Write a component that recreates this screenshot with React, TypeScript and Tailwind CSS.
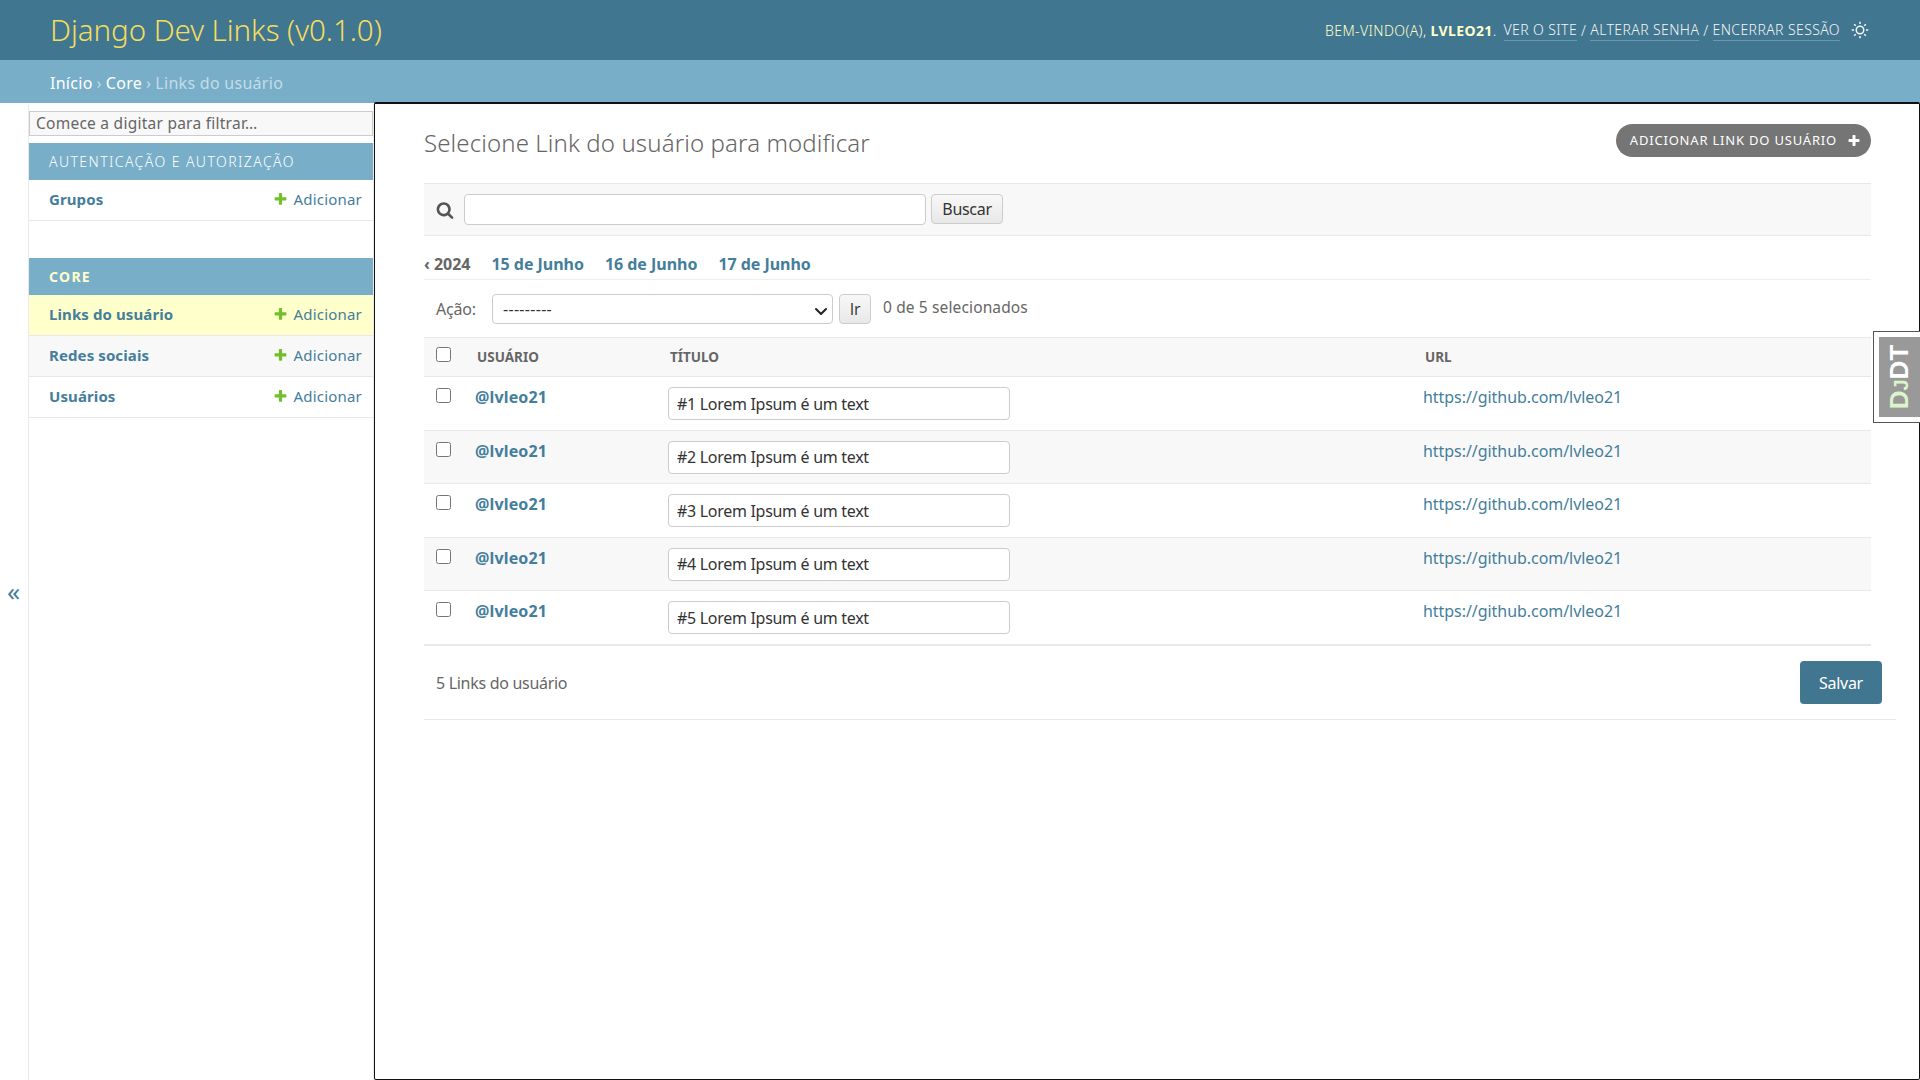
import React from "react";

const Plus = ({ className = "" }: { className?: string }) => (
  <svg viewBox="0 0 1792 1792" className={className} fill="currentColor">
    <path d="M1600 736v192q0 40-28 68t-68 28h-416v416q0 40-28 68t-68 28h-192q-40 0-68-28t-28-68v-416h-416q-40 0-68-28t-28-68v-192q0-40 28-68t68-28h416v-416q0-40 28-68t68-28h192q40 0 68 28t28 68v416h416q40 0 68 28t28 68z" />
  </svg>
);

const SearchIcon = () => (
  <svg viewBox="0 0 1792 1792" className="w-[18px] h-[18px] text-[#555]" fill="currentColor">
    <path d="M1216 832q0-185-131.500-316.500t-316.500-131.500-316.500 131.500-131.500 316.500 131.500 316.500 316.500 131.500 316.500-131.500 131.500-316.500zm512 832q0 52-38 90t-90 38q-54 0-90-38l-343-342q-179 124-399 124-143 0-273.500-55.500t-225-150-150-225-55.500-273.500 55.500-273.500 150-225 225-150 273.500-55.500 273.500 55.500 225 150 150 225 55.500 273.500q0 220-124 399l343 343q37 37 37 90z" />
  </svg>
);

const Sun = () => (
  <svg viewBox="0 0 24 24" className="w-[18px] h-[18px] block" fill="#f5f5f5">
    <path d="M12 18a6 6 0 1 1 0-12 6 6 0 0 1 0 12zm0-2a4 4 0 1 0 0-8 4 4 0 0 0 0 8zM11 1h2v3h-2V1zm0 19h2v3h-2v-3zM3.515 4.929l1.414-1.414L7.05 5.636 5.636 7.05 3.515 4.93zM16.95 18.364l1.414-1.414 2.121 2.121-1.414 1.414-2.121-2.121zm2.121-14.85l1.414 1.415-2.121 2.121-1.414-1.414 2.121-2.121zM5.636 16.95l1.414 1.414-2.121 2.121-1.414-1.414 2.121-2.121zM23 11v2h-3v-2h3zM4 11v2H1v-2h3z" />
  </svg>
);

const Chevron = () => (
  <svg viewBox="0 0 16 16" className="w-[16px] h-[16px] absolute right-[3px] top-[8px] text-[#222] pointer-events-none" fill="none" stroke="currentColor" strokeWidth="2" strokeLinecap="round" strokeLinejoin="round">
    <path d="M3 6l5 5 5-5" />
  </svg>
);

const Checkbox = () => (
  <span className="block w-[15px] h-[15px] rounded-[2.5px] border border-[#767676] bg-white shrink-0" />
);

const Row = ({ label, active, alt }: { label: string; active?: boolean; alt?: boolean }) => (
  <div
    className={`flex items-center justify-between h-[41px] pl-[20px] pr-[11px] pb-[2px] border-b border-[#e8e8e8] ${
      active ? "bg-[#ffffcc]" : alt ? "bg-[#f8f8f8]" : "bg-white"
    }`}
  >
    <a className="text-[#447e9b] text-[15px] tracking-[0.1px] font-bold">{label}</a>
    <span className="flex items-center gap-[5px] text-[#447e9b] text-[15px] tracking-[0.2px]">
      <Plus className="w-[15px] h-[15px] text-[#70bf2b]" />
      Adicionar
    </span>
  </div>
);

const rows = [1, 2, 3, 4, 5];

export default function App() {
  return (
    <div className="w-[1920px] h-[1080px] overflow-hidden bg-white flex flex-col font-['Noto_Sans',sans-serif] text-[#333]">
      <header className="h-[60px] shrink-0 bg-[#417690] flex items-center justify-between pl-[50px] pr-[51px]">
        <h1 className="text-[29.5px] font-light text-[#f5dd5d] tracking-[-0.05px]">Django Dev Links (v0.1.0)</h1>
        <div className="flex items-center text-[#ffffcc] text-[14px] uppercase tracking-[0.4px] font-light">
          <span>Bem-vindo(a), <strong className="font-bold">lvleo21</strong>.</span>
          <a className="ml-[7px] border-b border-white/25 text-[#f5f5f5]">Ver o site</a>
          <span className="mx-[4px] text-[#f5f5f5]">/</span>
          <a className="border-b border-white/25 text-[#f5f5f5]">Alterar senha</a>
          <span className="mx-[4px] text-[#f5f5f5]">/</span>
          <a className="border-b border-white/25 text-[#f5f5f5]">Encerrar sessão</a>
          <span className="ml-[11px]"><Sun /></span>
        </div>
      </header>
      <nav className="h-[43px] shrink-0 bg-[#79aec8] flex items-center pl-[50px] pt-[3px] text-[16px] tracking-[0.28px] text-[#c4dce8]">
        <a className="text-white">Início</a>
        <span className="mx-[4px]">›</span>
        <a className="text-white">Core</a>
        <span className="mx-[4px]">›</span>
        <span>Links do usuário</span>
      </nav>
      <div className="flex-1 flex min-h-0 mt-[1px]">
        <button className="w-[29px] shrink-0 border-r border-[#eaeaea] flex items-center justify-center text-[#447e9b] text-[26px] pb-[2px] pr-[1px]">«</button>
        <aside className="w-[345px] shrink-0 pt-[7px] border-r border-[#eaeaea]">
          <div className="h-[25px] border border-[#cccccc] bg-[#f8f8f8] flex items-center pl-[6px] pt-[1px] text-[#666] text-[15.5px] tracking-[0.25px]">Comece a digitar para filtrar…</div>
          <div className="mt-[7px] h-[37px] bg-[#79aec8] flex items-center pl-[20px] text-[14px] text-white uppercase tracking-[1.43px] font-light">Autenticação e Autorização</div>
          <Row label="Grupos" />
          <div className="h-[37px]" />
          <div className="h-[37px] bg-[#79aec8] flex items-center pl-[20px] text-[14px] text-[#ffffcc] uppercase tracking-[1.3px] font-bold">Core</div>
          <Row label="Links do usuário" active />
          <Row label="Redes sociais" alt />
          <Row label="Usuários" />
        </aside>
        <main className="flex-1 min-w-0 border-[1.5px] border-t-2 border-[#111] rounded-[2px] -mt-[2px] pt-[19px] pl-[49px] pr-[23px]">
          <div className="flex items-center justify-between h-[40px] pr-[25px]">
            <h2 className="text-[24px] font-light text-[#666] tracking-[0.12px]">Selecione Link do usuário para modificar</h2>
            <a className="-mt-[5px] h-[33px] rounded-full bg-[#757575] text-white text-[13px] uppercase tracking-[0.8px] font-normal flex items-center pl-[14px] pr-[10px] gap-[10px]">
              Adicionar link do usuário
              <Plus className="w-[14px] h-[14px]" />
            </a>
          </div>
          <div className="mr-[25px] mt-[20px]">
            <div className="h-[53px] bg-[#f8f8f8] border-y border-[#e8e8e8] flex items-center pl-[12px]">
              <SearchIcon />
              <div className="ml-[10px] w-[462px] h-[31px] bg-white border border-[#cccccc] rounded-[4px]" />
              <div className="ml-[5px] w-[72px] h-[30px] -mt-[1px] rounded-[4px] border border-[#cccccc] bg-gradient-to-b from-[#f8f8f8] to-[#e8e8e8] flex items-center justify-center text-[16px] tracking-[-0.3px]">Buscar</div>
            </div>
            <div className="h-[44px] border-b border-[#eeeeee] flex items-center pt-[12px] text-[16px] font-bold tracking-[-0.03px]">
              <span className="text-[#666]">‹ 2024</span>
              <a className="ml-[21px] text-[#447e9b]">15 de Junho</a>
              <a className="ml-[21px] text-[#447e9b]">16 de Junho</a>
              <a className="ml-[21px] text-[#447e9b]">17 de Junho</a>
            </div>
            <div className="h-[57px] flex items-center pl-[12px] text-[#666] text-[16px] tracking-[-0.2px]">
              <span className="w-[56px]">Ação:</span>
              <div className="relative w-[341px] h-[30px] bg-white border border-[#cccccc] rounded-[4px] flex items-center pl-[10px] text-[#333] text-[16px] tracking-[0.3px]">
                ---------
                <Chevron />
              </div>
              <div className="ml-[6px] w-[32px] h-[30px] rounded-[4px] border border-[#cccccc] bg-gradient-to-b from-[#f8f8f8] to-[#e8e8e8] flex items-center justify-center text-[#333] text-[16px] font-['Open_Sans',sans-serif]">Ir</div>
              <span className="ml-[12px] -mt-[2px] text-[15.5px] tracking-[0.13px]">0 de 5 selecionados</span>
            </div>
            <div className="grid grid-cols-[51px_193px_755px_1fr] border-y border-[#e8e8e8] bg-[#f8f8f8] h-[40px] items-center text-[13.5px] font-bold uppercase text-[#666]">
              <div className="pl-[12px] -mt-[5px]"><Checkbox /></div>
              <div className="pl-[2px] pt-[1px]">Usuário</div>
              <div className="pl-[2px] pt-[1px]">Título</div>
              <div className="pl-[2px] pt-[1px]">URL</div>
            </div>
            {rows.map((n) => (
              <div
                key={n}
                className={`grid grid-cols-[51px_193px_755px_1fr] border-[#e8e8e8] ${n % 2 === 0 ? "bg-[#f8f8f8]" : "bg-white"} ${n === 5 ? "h-[54.6px] border-b-2" : "h-[53.6px] border-b"}`}
              >
                <div className="pl-[12px] pt-[11px]"><Checkbox /></div>
                <a className="text-[#447e9b] font-bold text-[16px] tracking-[0.15px] pt-[8px]">@lvleo21</a>
                <div className="pt-[10px]">
                  <div className="w-[342px] h-[33px] bg-white border border-[#cccccc] rounded-[4px] flex items-center pl-[8px] text-[16px] tracking-[-0.3px] text-[#333]">#{n} Lorem Ipsum é um text</div>
                </div>
                <a className="text-[#447e9b] text-[16px] tracking-[-0.05px] pt-[8px]">https://github.com/lvleo21</a>
              </div>
            ))}
          </div>
          <div className="h-[74px] border-b border-[#e8e8e8] flex items-center justify-between pl-[12px] pr-[14px] pt-[1px] text-[#666] text-[16px] tracking-[-0.3px]">
            <span>5 Links do usuário</span>
            <a className="w-[82px] h-[43px] rounded-[4px] bg-[#417690] text-white flex items-center justify-center">Salvar</a>
          </div>
        </main>
      </div>
      <div className="fixed right-0 top-[331px] w-[47px] h-[92px] bg-white border border-r-0 border-[#555] flex items-center justify-end">
        <div className="w-[41px] h-[80px] bg-[#999999] flex items-center justify-center">
          <span className="-rotate-90 font-['Liberation_Sans',sans-serif] font-bold text-[26px] whitespace-nowrap leading-none">
            <span className="text-[#dcf5cb]">D<span className="text-[20px]">J</span></span><span className="text-white">DT</span>
          </span>
        </div>
      </div>
    </div>
  );
}
